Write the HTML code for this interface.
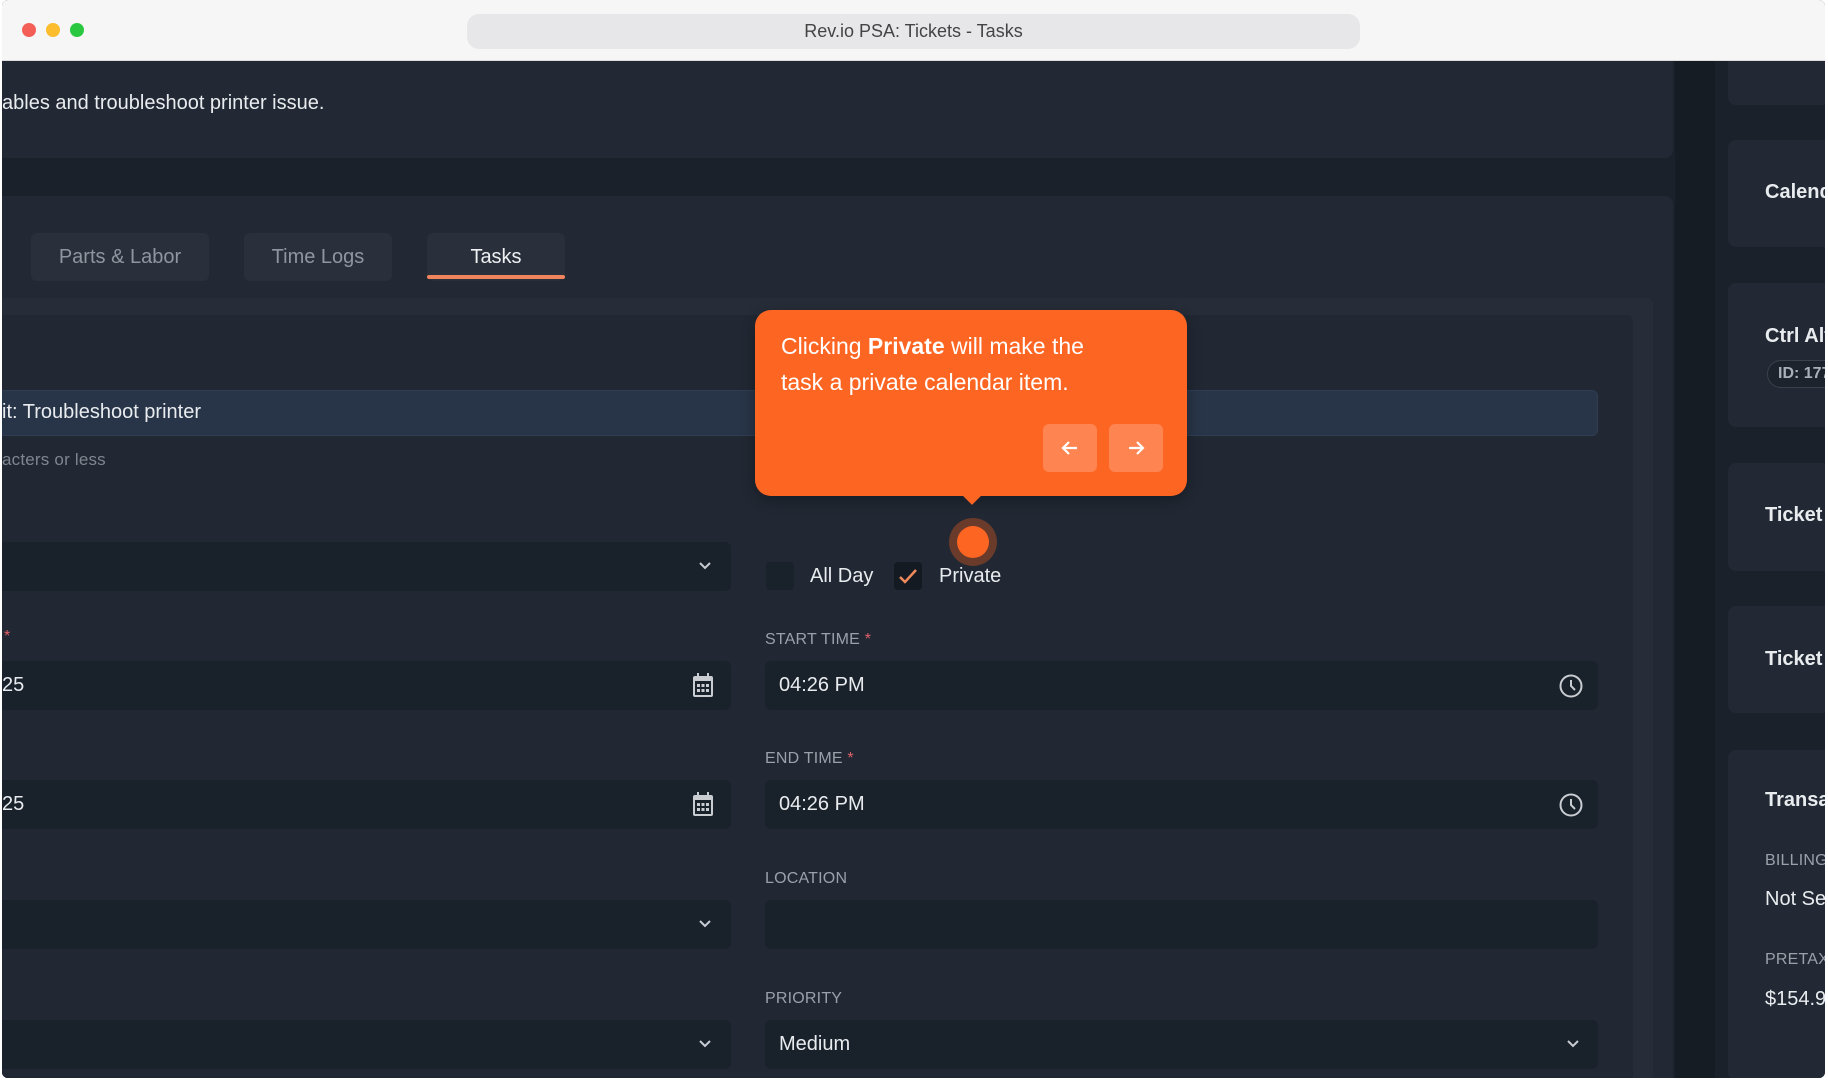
<!DOCTYPE html>
<html><head><meta charset="utf-8"><style>
*{box-sizing:border-box;margin:0;padding:0}
body{width:1828px;height:1080px;overflow:hidden;background:#fff;font-family:"Liberation Sans",sans-serif;position:relative}
.a{position:absolute;white-space:nowrap}
.win{left:2px;top:0;width:1823px;height:1078px;background:#1a212a;overflow:hidden;border-radius:6px}
.bar{left:0;top:0;width:1823px;height:61px;background:#f6f6f6;border-bottom:1px solid #ddd}
.dot{width:14px;height:14px;border-radius:50%;top:23px}
.url{left:465px;top:14px;width:893px;height:35px;border-radius:12px;background:#e7e7e9;color:#444;font-size:18px;text-align:center;line-height:35px}
.card{background:#222934;border-radius:8px}
.inp{background:#19212b;border-radius:6px}
.lbl{color:#9aa1ab;font-size:16px;letter-spacing:.2px}
.val{color:#e9ecef;font-size:20px}
.star{color:#e0606a}
.tab{background:#29303b;border-radius:6px;color:#8f96a0;font-size:20px;text-align:center;line-height:48px;height:48px}
.side{left:1726px;width:120px;background:#222934;border-radius:8px}
.st{color:#e9ecef;font-size:20px;font-weight:bold;left:1763px}
</style></head><body>
<div class="a win">
<div class="a bar"></div>
<div class="a dot" style="left:20px;background:#f35f57"></div>
<div class="a dot" style="left:44px;background:#fbbc2e"></div>
<div class="a dot" style="left:68px;background:#2ac840"></div>
<div class="a url">Rev.io PSA: Tickets - Tasks</div>

<div class="a card" style="left:-10px;top:61px;width:1681px;height:97px;border-radius:0 0 8px 0"></div>
<div class="a val" style="left:0;top:92px;font-size:20px">ables and troubleshoot printer issue.</div>

<div class="a card" style="left:-10px;top:196px;width:1681px;height:900px"></div>
<div class="a tab" style="left:29px;top:233px;width:178px">Parts &amp; Labor</div>
<div class="a tab" style="left:242px;top:233px;width:148px">Time Logs</div>
<div class="a tab" style="left:425px;top:233px;width:138px;color:#eef0f2">Tasks</div>
<div class="a" style="left:425px;top:275px;width:138px;height:4px;background:#f0845c;border-radius:2px"></div>

<div class="a" style="left:-10px;top:298px;width:1661px;height:800px;background:#262d38;border-radius:6px"></div>
<div class="a" style="left:-10px;top:315px;width:1641px;height:780px;background:#212833;border-radius:6px"></div>

<div class="a" style="left:-10px;top:390px;width:1606px;height:46px;background:#283548;border-radius:6px;border:1px solid #2e3d52"></div>
<div class="a val" style="left:0;top:401px">it: Troubleshoot printer</div>
<div class="a lbl" style="left:0;top:450px;color:#7f8690;font-size:17px">acters or less</div>

<div class="a inp" style="left:-10px;top:542px;width:739px;height:49px"></div>
<svg class="a" style="left:695px;top:558px" width="16" height="16" viewBox="0 0 16 16"><path d="M3 5l5 5 5-5" fill="none" stroke="#c9cdd2" stroke-width="2"/></svg>

<div class="a star" style="left:2px;top:628px;font-size:16px">*</div>
<div class="a inp" style="left:-10px;top:661px;width:739px;height:49px"></div>
<div class="a val" style="left:0;top:674px">25</div>
<div class="a inp" style="left:-10px;top:780px;width:739px;height:49px"></div>
<div class="a val" style="left:0;top:793px">25</div>
<svg class="a" style="left:689px;top:672px" width="24" height="26" viewBox="0 0 24 26"><rect x="2" y="4" width="20" height="21" rx="2" fill="#c9cdd2"/><rect x="4" y="9" width="16" height="14" fill="#19212b"/><rect x="6" y="1" width="2" height="5" fill="#c9cdd2"/><rect x="16" y="1" width="2" height="5" fill="#c9cdd2"/><g fill="#c9cdd2"><rect x="6" y="12" width="3" height="3"/><rect x="10.5" y="12" width="3" height="3"/><rect x="15" y="12" width="3" height="3"/><rect x="6" y="17" width="3" height="3"/><rect x="10.5" y="17" width="3" height="3"/><rect x="15" y="17" width="3" height="3"/></g></svg>
<svg class="a" style="left:689px;top:791px" width="24" height="26" viewBox="0 0 24 26"><rect x="2" y="4" width="20" height="21" rx="2" fill="#c9cdd2"/><rect x="4" y="9" width="16" height="14" fill="#19212b"/><rect x="6" y="1" width="2" height="5" fill="#c9cdd2"/><rect x="16" y="1" width="2" height="5" fill="#c9cdd2"/><g fill="#c9cdd2"><rect x="6" y="12" width="3" height="3"/><rect x="10.5" y="12" width="3" height="3"/><rect x="15" y="12" width="3" height="3"/><rect x="6" y="17" width="3" height="3"/><rect x="10.5" y="17" width="3" height="3"/><rect x="15" y="17" width="3" height="3"/></g></svg>
<div class="a inp" style="left:-10px;top:900px;width:739px;height:49px"></div>
<svg class="a" style="left:695px;top:916px" width="16" height="16" viewBox="0 0 16 16"><path d="M3 5l5 5 5-5" fill="none" stroke="#c9cdd2" stroke-width="2"/></svg>
<div class="a inp" style="left:-10px;top:1020px;width:739px;height:49px"></div>
<svg class="a" style="left:695px;top:1036px" width="16" height="16" viewBox="0 0 16 16"><path d="M3 5l5 5 5-5" fill="none" stroke="#c9cdd2" stroke-width="2"/></svg>

<div class="a" style="left:764px;top:562px;width:28px;height:28px;background:#19212b;border-radius:4px"></div>
<div class="a val" style="left:808px;top:565px">All Day</div>
<div class="a" style="left:892px;top:562px;width:28px;height:28px;background:#141a22;border-radius:4px"></div>
<svg class="a" style="left:894px;top:566px" width="24" height="20" viewBox="0 0 24 20"><path d="M4 11l5 5 11-12" fill="none" stroke="#f08a5d" stroke-width="2.5"/></svg>
<div class="a val" style="left:937px;top:565px">Private</div>

<div class="a lbl" style="left:763px;top:631px">START TIME <span class="star">*</span></div>
<div class="a inp" style="left:763px;top:661px;width:833px;height:49px"></div>
<div class="a val" style="left:777px;top:674px">04:26 PM</div>
<svg class="a" style="left:1556px;top:673px" width="26" height="26" viewBox="0 0 26 26"><circle cx="13" cy="13" r="10.5" fill="none" stroke="#c9cdd2" stroke-width="2"/><path d="M13 7v6l4 4" fill="none" stroke="#c9cdd2" stroke-width="2"/></svg>
<div class="a lbl" style="left:763px;top:750px">END TIME <span class="star">*</span></div>
<div class="a inp" style="left:763px;top:780px;width:833px;height:49px"></div>
<div class="a val" style="left:777px;top:793px">04:26 PM</div>
<svg class="a" style="left:1556px;top:792px" width="26" height="26" viewBox="0 0 26 26"><circle cx="13" cy="13" r="10.5" fill="none" stroke="#c9cdd2" stroke-width="2"/><path d="M13 7v6l4 4" fill="none" stroke="#c9cdd2" stroke-width="2"/></svg>
<div class="a lbl" style="left:763px;top:870px">LOCATION</div>
<div class="a inp" style="left:763px;top:900px;width:833px;height:49px"></div>
<div class="a lbl" style="left:763px;top:990px">PRIORITY</div>
<div class="a inp" style="left:763px;top:1020px;width:833px;height:49px"></div>
<div class="a val" style="left:777px;top:1033px">Medium</div>
<svg class="a" style="left:1563px;top:1036px" width="16" height="16" viewBox="0 0 16 16"><path d="M3 5l5 5 5-5" fill="none" stroke="#c9cdd2" stroke-width="2"/></svg>

<div class="a" style="left:1673px;top:61px;width:40px;height:1020px;background:#161c24"></div>
<div class="a side" style="top:61px;height:44px;border-radius:0 0 0 8px"></div>
<div class="a side" style="top:140px;height:107px"></div>
<div class="a st" style="top:181px">Calend</div>
<div class="a side" style="top:283px;height:144px"></div>
<div class="a st" style="top:325px">Ctrl Alt</div>
<div class="a" style="left:1765px;top:360px;width:80px;height:28px;border:1px solid #39414c;border-radius:14px;background:#1c232c;color:#aab0b8;font-size:16px;font-weight:bold;line-height:26px;padding-left:10px">ID: 177</div>
<div class="a side" style="top:463px;height:108px"></div>
<div class="a st" style="top:504px">Ticket</div>
<div class="a side" style="top:606px;height:107px"></div>
<div class="a st" style="top:648px">Ticket</div>
<div class="a side" style="top:750px;height:330px"></div>
<div class="a st" style="top:789px">Transa</div>
<div class="a lbl" style="left:1763px;top:852px">BILLING</div>
<div class="a val" style="left:1763px;top:888px">Not Se</div>
<div class="a lbl" style="left:1763px;top:951px">PRETAX</div>
<div class="a val" style="left:1763px;top:988px">$154.9</div>

<div class="a" style="left:753px;top:310px;width:432px;height:186px;background:#fd6522;border-radius:16px;box-shadow:0 4px 14px rgba(0,0,0,.3)"></div>
<div class="a" style="left:963px;top:488px;width:14px;height:14px;background:#fd6522;transform:rotate(45deg)"></div>
<div class="a" style="left:779px;top:328px;color:#fff;font-size:23px;line-height:36px;width:310px;white-space:normal">Clicking <b>Private</b> will make the task a private calendar item.</div>
<div class="a" style="left:1041px;top:424px;width:54px;height:48px;background:#fe8452;border-radius:6px"></div>
<div class="a" style="left:1107px;top:424px;width:54px;height:48px;background:#fe8452;border-radius:6px"></div>
<svg class="a" style="left:1056px;top:436px" width="24" height="24" viewBox="0 0 24 24"><path d="M19 12H5M11 6l-6 6 6 6" fill="none" stroke="#fff" stroke-width="2.2"/></svg>
<svg class="a" style="left:1122px;top:436px" width="24" height="24" viewBox="0 0 24 24"><path d="M5 12h14M13 6l6 6-6 6" fill="none" stroke="#fff" stroke-width="2.2"/></svg>

<div class="a" style="left:947px;top:518px;width:48px;height:48px;border-radius:50%;background:#6a3a2a"></div>
<div class="a" style="left:955px;top:526px;width:32px;height:32px;border-radius:50%;background:#fd6522"></div>
</div>
</body></html>
